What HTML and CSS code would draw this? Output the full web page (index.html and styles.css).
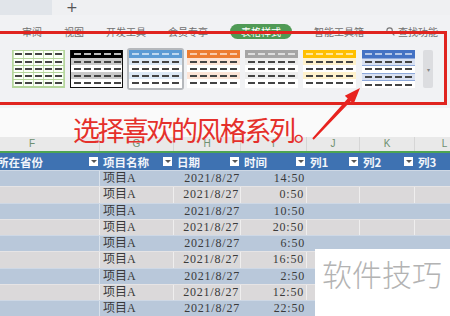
FILE: index.html
```html
<!DOCTYPE html>
<html lang="zh-CN">
<head>
    <meta charset="UTF-8">
    <title>表格样式</title>
    <link rel="stylesheet" href="styles.css">
</head>
<body>
    <div class="tabbar">
        <div class="tab"></div>
        <span class="plus">+</span>
    </div>

    <div class="ribbon">
        <div class="menu">
            <span>审阅</span>
            <span>视图</span>
            <span>开发工具</span>
            <span>会员专享</span>
            <span class="active">表格样式</span>
            <span>智能工具箱</span>
            <span class="search">
                <svg width="9" height="9" viewBox="0 0 9 9"><circle cx="3.6" cy="3.6" r="2.7" fill="none" stroke="#777" stroke-width="1.1"/><path d="M5.6 5.6 8.4 8.4" stroke="#777" stroke-width="1.2"/></svg>
                查找功能
            </span>
        </div>

        <!-- table style gallery -->
        <div class="gallery">
            <div class="swatch"><div class="thumb green"><div class="th"></div><div class="tr"></div><div class="tr"></div><div class="tr"></div><div class="tr"></div></div></div>
            <div class="swatch"><div class="thumb black"><div class="th"></div><div class="tr"></div><div class="tr"></div><div class="tr"></div><div class="tr"></div></div></div>
            <div class="swatch selected"><div class="thumb sky"><div class="th"></div><div class="tr"></div><div class="tr"></div><div class="tr"></div><div class="tr"></div></div></div>
            <div class="swatch"><div class="thumb orange"><div class="th"></div><div class="tr"></div><div class="tr"></div><div class="tr"></div><div class="tr"></div></div></div>
            <div class="swatch"><div class="thumb gray"><div class="th"></div><div class="tr"></div><div class="tr"></div><div class="tr"></div><div class="tr"></div></div></div>
            <div class="swatch"><div class="thumb gold"><div class="th"></div><div class="tr"></div><div class="tr"></div><div class="tr"></div><div class="tr"></div></div></div>
            <div class="swatch"><div class="thumb navy"><div class="th"></div><div class="tr"></div><div class="tr"></div><div class="tr"></div><div class="tr"></div></div></div>
            <div class="more">▾</div>
        </div>
    </div>

    <div class="blank"></div>

    <div class="sheet">
        <div class="row letters">
            <span>F</span><span>G</span><span>H</span><span>I</span><span>J</span><span>K</span><span>L</span>
        </div>
        <div class="row head">
            <span class="first">所在省份<i class="drop"></i></span>
            <span>项目名称<i class="drop"></i></span>
            <span>日期<i class="drop"></i></span>
            <span>时间<i class="drop"></i></span>
            <span>列1<i class="drop"></i></span>
            <span>列2<i class="drop"></i></span>
            <span>列3<i class="drop"></i></span>
        </div>
        <div class="row rec"><span></span><span>项目A</span><span class="date">2021/8/27</span><span class="time">14:50</span><span></span><span></span><span></span></div>
        <div class="row rec"><span></span><span>项目A</span><span class="date">2021/8/27</span><span class="time">0:50</span><span></span><span></span><span></span></div>
        <div class="row rec"><span></span><span>项目A</span><span class="date">2021/8/27</span><span class="time">10:50</span><span></span><span></span><span></span></div>
        <div class="row rec"><span></span><span>项目A</span><span class="date">2021/8/27</span><span class="time">20:50</span><span></span><span></span><span></span></div>
        <div class="row rec"><span></span><span>项目A</span><span class="date">2021/8/27</span><span class="time">6:50</span><span></span><span></span><span></span></div>
        <div class="row rec"><span></span><span>项目A</span><span class="date">2021/8/27</span><span class="time">16:50</span><span></span><span></span><span></span></div>
        <div class="row rec"><span></span><span>项目A</span><span class="date">2021/8/27</span><span class="time">2:50</span><span></span><span></span><span></span></div>
        <div class="row rec"><span></span><span>项目A</span><span class="date">2021/8/27</span><span class="time">12:50</span><span></span><span></span><span></span></div>
        <div class="row rec"><span></span><span>项目A</span><span class="date">2021/8/27</span><span class="time">22:50</span><span></span><span></span><span></span></div>
    </div>

    <!-- annotations drawn over the screenshot -->
    <div class="callout"></div>
    <p class="note">选择喜欢的风格系列。</p>
    <svg class="arrow" width="70" height="65" viewBox="0 0 70 65">
        <polygon points="12.3,58.3 47.7,18.4 44.8,15.7 60,8 53.6,23.9 50.7,21.2 13.7,59.7" fill="#e8231f"/>
    </svg>
    <div class="watermark">软件技巧</div>
</body>
</html>
```

FILE: styles.css
```css
body {
    margin: 0;
    width: 450px;
    height: 316px;
    overflow: hidden;
    position: relative;
    background: #fafafa;
    font-family: "Noto Sans CJK SC", sans-serif;
}
.tabbar {
    height: 15px;
    display: flex;
    align-items: center;
    background: #eff0f2;
}
.tab {
    width: 52px;
    height: 15px;
    background: #e1e5ea;
}
.plus {
    margin-left: 14px;
    font: 14px/15px "DejaVu Sans", sans-serif;
    color: #555;
}
.ribbon {
    height: 93px;
    background: #f1f2f4;
}
.menu {
    height: 33px;
    display: flex;
    align-items: center;
    gap: 22px;
    padding-left: 22px;
    font-size: 10px;
    color: #707070;
    white-space: nowrap;
}
.menu .active {
    background: #4f9a55;
    color: #fff;
    border-radius: 8px;
    padding: 0 11px;
    line-height: 15px;
}
.search {
    display: flex;
    align-items: center;
    gap: 3px;
}
.gallery {
    display: flex;
    align-items: flex-start;
    gap: 1.3px;
    padding-left: 10px;
}
.swatch {
    padding: 2px;
    border-radius: 3px;
}
.swatch.selected {
    background: #b5b8bc;
}
.thumb {
    width: 53px;
    height: 38px;
    display: flex;
    flex-direction: column;
    background: #fff;
    --dash: #444;
    --hdash: #444;
    --head: #fff;
    --odd: #fff;
    --even: #fff;
}
.thumb div {
    height: 7px;
    background: linear-gradient(to right, var(--dash) 7px, transparent 7px) 3px 50% / 10px 2px repeat-x, var(--row);
}
.thumb .th {
    height: 8px;
    --row: var(--head);
    --dash: var(--hdash);
}
.thumb .tr:nth-child(even) {
    --row: var(--odd);
}
.thumb .tr:nth-child(odd) {
    --row: var(--even);
}
.green {
    border: 1px solid #b5d69c;
    box-sizing: border-box;
}
.green div {
    border-bottom: 1px solid #b5d69c;
    background: linear-gradient(to right, #444 7px, transparent 7px) 2px 50% / 10px 2px repeat-x,
                linear-gradient(to right, #c6e0b4 1px, transparent 1px) 0 0 / 10px 100% repeat-x, #fbfff8;
}
.black {
    border-left: 1px solid #111;
    border-right: 1px solid #111;
    border-bottom: 1px solid #111;
    box-sizing: border-box;
    --head: #000;
    --hdash: #bbb;
    --odd: #c9c9c9;
    --even: #fff;
}
.sky {
    --head: #5b9bd5;
    --hdash: #bfd8ef;
    --odd: #dbe8f5;
    --even: #fff;
}
.orange {
    --head: #ed7d31;
    --hdash: #f8cbad;
    --odd: #fce4d6;
    --even: #fff;
}
.gray {
    --head: #a5a5a5;
    --hdash: #dedede;
    --odd: #ededed;
    --even: #fff;
}
.gold {
    --head: #ffc000;
    --hdash: #ffe699;
    --odd: #fff2cc;
    --even: #fff;
}
.navy {
    --head: #4472c4;
    --hdash: #b4c6e7;
    --odd: #d9e1f2;
    --even: #fff;
}
.navy .tr {
    border-top: 1px solid #8ea9db;
}
.more {
    width: 10px;
    height: 38px;
    margin: 2px 0 0 5px;
    background: #dcdde0;
    border-radius: 2px;
    display: flex;
    align-items: center;
    justify-content: center;
    font-size: 6px;
    color: #888;
}
.blank {
    height: 29px;
    background: #fafafa;
}
.sheet {
    margin-left: -35px;
    --cols: 135px 74px 67px 66px 53px 55px 60px;
}
.row {
    display: grid;
    grid-template-columns: var(--cols);
}
.letters {
    height: 14px;
    background: #e9e9e9;
    border-bottom: 2px solid #4ea552;
}
.letters span {
    text-align: center;
    font: 10px/14px "Liberation Sans", sans-serif;
    color: #6f9070;
    border-right: 1px solid #d6d6d6;
}
.head {
    height: 17px;
    background: #3e72b2;
}
.head span {
    display: flex;
    align-items: center;
    justify-content: space-between;
    padding: 0 2px 0 3px;
    font-size: 11.5px;
    font-weight: 700;
    color: #f2f5fa;
    white-space: nowrap;
}
.head .first {
    padding-left: 32px;
}
.drop {
    width: 9px;
    height: 9px;
    background: #fff;
    display: flex;
    align-items: center;
    justify-content: center;
}
.drop::after {
    content: "";
    border-left: 3px solid transparent;
    border-right: 3px solid transparent;
    border-top: 3px solid #555;
}
.rec {
    height: 16.25px;
    background: #dbd9da;
    border-top: 1px solid rgba(255, 255, 255, 0.3);
    box-sizing: border-box;
}
.rec:nth-child(odd) {
    background: #b9c8da;
}
.rec span {
    padding: 0 3px;
    font: 12px/15px "Liberation Serif", "Noto Sans CJK SC", serif;
    color: #3a3a3a;
    white-space: nowrap;
}
.rec span:first-child {
    border-right: 1px solid rgba(255, 255, 255, 0.45);
}
.rec:nth-child(even) span {
    border-right: 1px solid rgba(255, 255, 255, 0.55);
}
.rec .date {
    text-align: right;
    padding-right: 1px;
    letter-spacing: 0.8px;
}
.rec .time {
    text-align: right;
    padding-right: 2px;
    letter-spacing: 0.8px;
}
.callout {
    position: absolute;
    left: -4px;
    top: 31px;
    width: 451px;
    height: 74px;
    border: 3px solid #e0241f;
    box-sizing: border-box;
}
.note {
    position: absolute;
    left: 73px;
    top: 116px;
    margin: 0;
    font-size: 27px;
    line-height: 27px;
    letter-spacing: -2.5px;
    color: #e5302b;
    white-space: nowrap;
}
.arrow {
    position: absolute;
    left: 300px;
    top: 80px;
}
.watermark {
    position: absolute;
    left: 315px;
    top: 249px;
    right: 0;
    bottom: 0;
    background: #fff;
    padding: 6px 0 0 7px;
    font-size: 30px;
    line-height: 36px;
    font-weight: 300;
    color: #b3b3b3;
}
```
